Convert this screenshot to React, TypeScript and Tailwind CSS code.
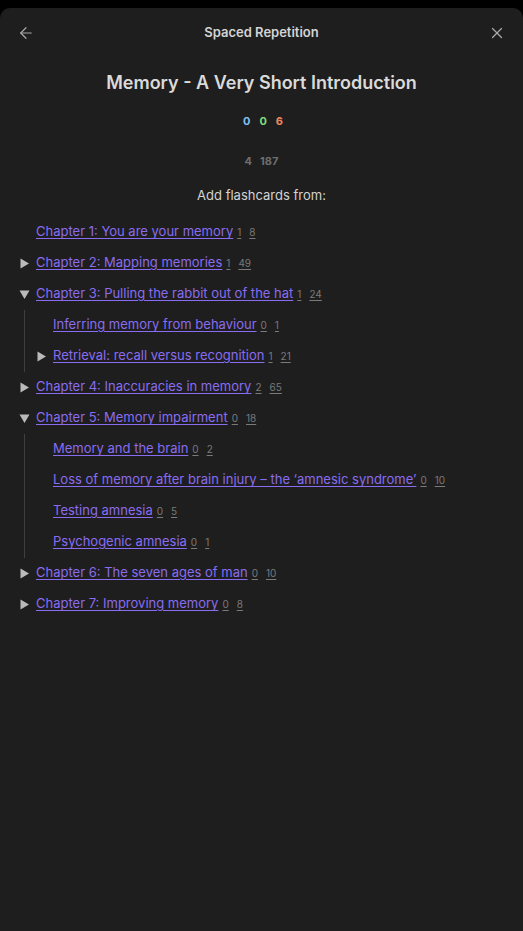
import { ArrowLeft, X } from 'lucide-react'

type Item = {
  title: string
  due: number
  total: number
  state?: 'open' | 'closed'
  children?: Item[]
}

const items: Item[] = [
  { title: 'Chapter 1: You are your memory', due: 1, total: 8 },
  { title: 'Chapter 2: Mapping memories', due: 1, total: 49, state: 'closed' },
  {
    title: 'Chapter 3: Pulling the rabbit out of the hat',
    due: 1,
    total: 24,
    state: 'open',
    children: [
      { title: 'Inferring memory from behaviour', due: 0, total: 1 },
      { title: 'Retrieval: recall versus recognition', due: 1, total: 21, state: 'closed' },
    ],
  },
  { title: 'Chapter 4: Inaccuracies in memory', due: 2, total: 65, state: 'closed' },
  {
    title: 'Chapter 5: Memory impairment',
    due: 0,
    total: 18,
    state: 'open',
    children: [
      { title: 'Memory and the brain', due: 0, total: 2 },
      { title: 'Loss of memory after brain injury – the ‘amnesic syndrome’', due: 0, total: 10 },
      { title: 'Testing amnesia', due: 0, total: 5 },
      { title: 'Psychogenic amnesia', due: 0, total: 1 },
    ],
  },
  { title: 'Chapter 6: The seven ages of man', due: 0, total: 10, state: 'closed' },
  { title: 'Chapter 7: Improving memory', due: 0, total: 8, state: 'closed' },
]

function Caret({ state }: { state?: 'open' | 'closed' }) {
  if (!state) return <span className="w-[17px] shrink-0" />
  return (
    <span className="flex w-[17px] shrink-0 items-center">
      <svg width="11" height="11" viewBox="0 0 11 11" className="text-[#bababa]">
        {state === 'closed' ? (
          <path d="M1.5 0.5 L10 5.5 L1.5 10.5 Z" fill="currentColor" />
        ) : (
          <path d="M0.5 1.5 L10.5 1.5 L5.5 10 Z" fill="currentColor" />
        )}
      </svg>
    </span>
  )
}

function Row({ item }: { item: Item }) {
  return (
    <div>
      <div className="flex h-[31px] items-center">
        <Caret state={item.state} />
        <a className="cursor-pointer text-[13px] text-[#8a6cf0] underline underline-offset-[2px]">
          {item.title}
        </a>
        <span className="ml-[4px] text-[10px] text-[#7a7a7a] underline underline-offset-[2px]">
          {item.due}
        </span>
        <span className="ml-[8px] text-[10px] text-[#7a7a7a] underline underline-offset-[2px]">
          {item.total}
        </span>
      </div>
      {item.children && (
        <div className="ml-[5px] border-l border-[#3f3f3f] pl-[11px]">
          {item.children.map((child) => (
            <Row key={child.title} item={child} />
          ))}
        </div>
      )}
    </div>
  )
}

export default function App() {
  return (
    <div
      className="min-h-[931px] bg-black pt-[8px]"
      style={{ fontFamily: 'Inter, "Noto Sans", sans-serif' }}
    >
      <div className="min-h-[923px] rounded-t-[10px] bg-[#1e1e1e] text-[#dadada]">
        <div className="flex h-[46px] items-center justify-between px-[17px] pt-[3px]">
          <ArrowLeft className="size-[18px] text-[#a8a8a8]" strokeWidth={1.6} />
          <span className="text-[13px] font-semibold text-[#d4d4d4]">Spaced Repetition</span>
          <X className="size-[18px] text-[#a8a8a8]" strokeWidth={1.6} />
        </div>
        <h1 className="mt-[15px] text-center text-[18px] font-semibold text-[#dadada]">
          Memory - A Very Short Introduction
        </h1>
        <div className="mt-[17px] flex justify-center gap-[9px] pl-[3px] text-[11px] font-bold">
          <span className="text-[#7cc1f2]">0</span>
          <span className="text-[#7ddc7a]">0</span>
          <span className="text-[#f1875b]">6</span>
        </div>
        <div className="mt-[23px] flex justify-center gap-[8px] text-[11px] font-bold text-[#6e6e6e]">
          <span>4</span>
          <span>187</span>
        </div>
        <p className="mt-[17px] text-center text-[13px] text-[#d4d4d4]">Add flashcards from:</p>
        <div className="mt-[11px] px-[19px]">
          {items.map((item) => (
            <Row key={item.title} item={item} />
          ))}
        </div>
      </div>
    </div>
  )
}
